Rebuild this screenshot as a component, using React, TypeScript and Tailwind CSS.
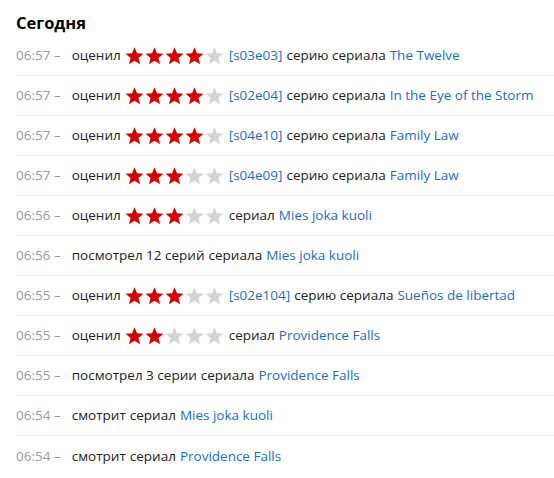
import React from 'react';

type Item = {
  time: string;
  action: string;
  rating?: number;
  episode?: string;
  middle: string;
  title: string;
};

const ITEMS: Item[] = [
  { time: '06:57', action: 'оценил', rating: 4, episode: '[s03e03]', middle: 'серию сериала', title: 'The Twelve' },
  { time: '06:57', action: 'оценил', rating: 4, episode: '[s02e04]', middle: 'серию сериала', title: 'In the Eye of the Storm' },
  { time: '06:57', action: 'оценил', rating: 4, episode: '[s04e10]', middle: 'серию сериала', title: 'Family Law' },
  { time: '06:57', action: 'оценил', rating: 3, episode: '[s04e09]', middle: 'серию сериала', title: 'Family Law' },
  { time: '06:56', action: 'оценил', rating: 3, middle: 'сериал', title: 'Mies joka kuoli' },
  { time: '06:56', action: 'посмотрел 12 серий', middle: 'сериала', title: 'Mies joka kuoli' },
  { time: '06:55', action: 'оценил', rating: 3, episode: '[s02e104]', middle: 'серию сериала', title: 'Sueños de libertad' },
  { time: '06:55', action: 'оценил', rating: 2, middle: 'сериал', title: 'Providence Falls' },
  { time: '06:55', action: 'посмотрел 3 серии', middle: 'сериала', title: 'Providence Falls' },
  { time: '06:54', action: 'смотрит', middle: 'сериал', title: 'Mies joka kuoli' },
  { time: '06:54', action: 'смотрит', middle: 'сериал', title: 'Providence Falls' },
];

const Star = ({ on }: { on: boolean }) => (
  <svg width="19" height="19" viewBox="0 0 24 24" className={on ? 'text-[#d60000]' : 'text-[#d4d4d4]'}>
    <path
      fill="currentColor"
      d="M12 1.5l3.1 7.6 8.2.6-6.3 5.3 2 8-7-4.4-7 4.4 2-8L.7 9.7l8.2-.6z"
    />
  </svg>
);

const Stars = ({ value }: { value: number }) => (
  <span className="inline-flex items-center gap-[1px] ml-[4px] mr-[5px]">
    {[1, 2, 3, 4, 5].map(i => (
      <Star key={i} on={i <= value} />
    ))}
  </span>
);

const App: React.FC = () => {
  return (
    <div className="w-[554px] h-[478px] bg-white pl-4 pt-[11px] font-['Open_Sans',sans-serif] overflow-hidden">
      <h2 className="text-[16.5px] leading-6 font-bold text-black">Сегодня</h2>
      <div className="mt-[1px]">
        {ITEMS.map((item, idx) => (
          <div
            key={idx}
            className={`flex items-center h-10 text-[13.5px] text-[#222] whitespace-nowrap ${idx < ITEMS.length - 1 ? 'border-b border-[#ebebeb]' : ''}`}
          >
            <span className="text-[#999]">{item.time} –</span>
            <span className="ml-[11px]">{item.action}</span>
            {item.rating !== undefined ? <Stars value={item.rating} /> : <span className="w-[4px]" />}
            {item.episode && <span className="text-[#1a6dcc] mr-[4px]">{item.episode}</span>}
            <span>{item.middle}</span>
            <span className="text-[#1a6dcc] ml-[4px]">{item.title}</span>
          </div>
        ))}
      </div>
    </div>
  );
};

export default App;
